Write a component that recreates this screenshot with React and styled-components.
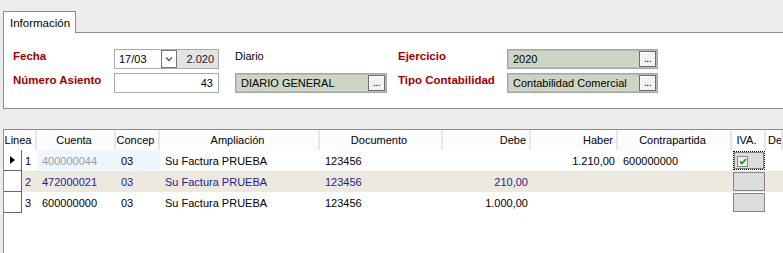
import React from 'react'
import styled, { createGlobalStyle } from 'styled-components'

const GlobalStyle = createGlobalStyle`
  html, body {
    margin: 0;
    padding: 0;
    background: #ececec;
    font-family: "Liberation Sans", Arial, sans-serif;
    font-size: 11px;
    color: #000;
  }
`;

const Page = styled.div`
  width: 783px;
  height: 253px;
  overflow: hidden;
  display: flex;
  flex-direction: column;
`;

const TabStrip = styled.div`
  height: 32px;
  display: flex;
  align-items: flex-end;
  padding-left: 3px;
`;

const Tab = styled.div`
  height: 22px;
  width: 73px;
  background: #fff;
  border: 1px solid #8e8e8e;
  border-bottom: none;
  margin-bottom: -1px;
  position: relative;
  z-index: 1;
  display: flex;
  align-items: center;
  padding-left: 6px;
  box-sizing: border-box;
  font-size: 11.5px;
`;

const Panel = styled.div`
  margin-left: 3px;
  height: 77px;
  box-sizing: border-box;
  background: #fff;
  border: 1px solid #8e8e8e;
  border-right: none;
  padding: 16px 0 0 9px;
`;

const Form = styled.div`
  display: grid;
  grid-template-columns: 101px 105px 16px 152px 11px 109px 151px;
  grid-template-rows: 20px 20px;
  row-gap: 4px;
  align-items: center;
`;

const Label = styled.div`
  grid-column: ${p => p.col};
  font-size: ${p => (p.strong ? '11.5px' : '11px')};
  font-weight: ${p => (p.strong ? 'bold' : 'normal')};
  color: ${p => (p.strong ? '#a00000' : '#000')};
  align-self: start;
  line-height: 14px;
`;

const DateCombo = styled.div`
  grid-column: 2;
  height: 20px;
  box-sizing: border-box;
  border: 1px solid #a9a9a9;
  display: flex;
  align-items: stretch;
`;

const DatePart = styled.div`
  width: 46px;
  display: flex;
  align-items: center;
  padding-left: 4px;
  box-sizing: border-box;
`;

const DropButton = styled.div`
  width: 16px;
  border: 1px solid #777;
  box-sizing: border-box;
  background: #fff;
  display: flex;
  align-items: center;
  justify-content: center;
`;

const YearPart = styled.div`
  flex: 1;
  background: #e3e3e3;
  display: flex;
  align-items: center;
  justify-content: flex-end;
  padding-right: 4px;
  color: #222;
`;

const NumberBox = styled.div`
  grid-column: 2;
  height: 20px;
  box-sizing: border-box;
  border: 1px solid #a9a9a9;
  display: flex;
  align-items: center;
  justify-content: flex-end;
  padding-right: 5px;
`;

const Lookup = styled.div`
  grid-column: ${p => p.col};
  height: 20px;
  box-sizing: border-box;
  background: #cdd6c5;
  border: 1px solid #a6a6a6;
  box-shadow: inset 0 0 0 1px #b9beb4;
  display: flex;
  align-items: center;
  justify-content: space-between;
  padding: 0 1px 0 5px;
`;

const DotsButton = styled.div`
  width: 17px;
  height: 16px;
  box-sizing: border-box;
  border: 1px solid #6e6e6e;
  background: #f2f2f2;
  box-shadow: inset 1px 1px 0 #fff;
  display: flex;
  align-items: flex-end;
  justify-content: center;
  font-size: 10px;
  line-height: 10px;
  padding-bottom: 2px;
  letter-spacing: -0.5px;
`;

const GridBox = styled.div`
  margin: 20px 0 0 3px;
  flex: 1;
  background: #fff;
  border-top: 1px solid #8e8e8e;
  border-left: 1px solid #8e8e8e;
`;

const cols = '18px 15px 79px 44px 160px 123px 88px 87px 114px 34px 1fr';

const HeaderRow = styled.div`
  display: grid;
  grid-template-columns: ${cols};
  height: 20px;
  background: #f5f5f5;
`;

const HeadCell = styled.div`
  grid-column: ${p => p.span || 'auto'};
  display: flex;
  align-items: center;
  justify-content: ${p => (p.right ? 'flex-end' : p.left ? 'flex-start' : 'center')};
  padding: 0 3px 0 ${p => (p.left ? '2px' : '0')};
  background: #fcfcfc;
  border-right: 2px solid #e6e6e6;
  white-space: nowrap;
  overflow: hidden;
`;

const Row = styled.div`
  display: grid;
  grid-template-columns: ${cols};
  height: 21px;
  color: ${p => (p.alt ? '#1d1d8a' : '#000')};
`;

const Indicator = styled.div`
  border-right: 1px solid #666;
  border-bottom: 1px solid #666;
  background: #fff;
  display: flex;
  align-items: center;
  justify-content: center;
  box-sizing: border-box;
`;

const Cell = styled.div`
  background: ${p => (p.sel ? '#eef6fe' : p.alt ? '#ede9df' : '#fff')};
  color: ${p => p.muted ? '#9c9c9c' : 'inherit'};
  display: flex;
  align-items: center;
  justify-content: ${p => (p.right ? 'flex-end' : 'flex-start')};
  padding: ${p => (p.right ? '0 3px 0 0' : '0 0 0 5px')};
  white-space: nowrap;
  overflow: hidden;
`;

const CheckCell = styled.div`
  background: ${p => (p.alt ? '#ede9df' : '#fff')};
  padding: 1px;
  display: flex;
`;

const CheckFrame = styled.div`
  flex: 1;
  box-sizing: border-box;
  outline: ${p => (p.focus ? '1px dotted #000' : 'none')};
  outline-offset: -1px;
  padding: ${p => (p.focus ? '1px' : '0')};
  display: flex;
`;

const CheckInner = styled.div`
  flex: 1;
  background: #dcdcdc;
  border: 1px solid #858585;
  display: flex;
  align-items: flex-start;
  padding: 3px 0 0 2px;
`;

const Check = styled.div`
  width: 11px;
  height: 11px;
  box-sizing: border-box;
  border: 1px solid #8a8a8a;
  background: #f0f0f0;
  display: flex;
  align-items: center;
  justify-content: center;
`;

const rows = [
  { n: 1, cuenta: '400000044', concep: '03', ampl: 'Su Factura PRUEBA', doc: '123456', debe: '', haber: '1.210,00', contra: '600000000', checked: true },
  { n: 2, cuenta: '472000021', concep: '03', ampl: 'Su Factura PRUEBA', doc: '123456', debe: '210,00', haber: '', contra: '' },
  { n: 3, cuenta: '600000000', concep: '03', ampl: 'Su Factura PRUEBA', doc: '123456', debe: '1.000,00', haber: '', contra: '' },
]

const App = () => {
  return (
    <Page>
      <GlobalStyle />
      <TabStrip>
        <Tab>Información</Tab>
      </TabStrip>
      <Panel>
        <Form>
          <Label col={1} strong>Fecha</Label>
          <DateCombo>
            <DatePart>17/03</DatePart>
            <DropButton>
              <svg width="8" height="6" viewBox="0 0 8 6">
                <polyline points="1,1.5 4,4.5 7,1.5" fill="none" stroke="#555" strokeWidth="1.3" />
              </svg>
            </DropButton>
            <YearPart>2.020</YearPart>
          </DateCombo>
          <Label col={4}>Diario</Label>
          <Label col={6} strong>Ejercicio</Label>
          <Lookup col={7}>
            <span>2020</span>
            <DotsButton>...</DotsButton>
          </Lookup>

          <Label col={1} strong>Número Asiento</Label>
          <NumberBox>43</NumberBox>
          <Lookup col={4}>
            <span>DIARIO GENERAL</span>
            <DotsButton>...</DotsButton>
          </Lookup>
          <Label col={6} strong>Tipo Contabilidad</Label>
          <Lookup col={7}>
            <span>Contabilidad Comercial</span>
            <DotsButton>...</DotsButton>
          </Lookup>
        </Form>
      </Panel>

      <GridBox>
        <HeaderRow>
          <HeadCell span="span 2">Linea</HeadCell>
          <HeadCell>Cuenta</HeadCell>
          <HeadCell>Concep</HeadCell>
          <HeadCell>Ampliación</HeadCell>
          <HeadCell>Documento</HeadCell>
          <HeadCell right>Debe</HeadCell>
          <HeadCell right>Haber</HeadCell>
          <HeadCell>Contrapartida</HeadCell>
          <HeadCell>IVA.</HeadCell>
          <HeadCell left>De</HeadCell>
        </HeaderRow>
        {rows.map((r, i) => {
          const alt = i === 1
          const first = i === 0
          return (
            <Row key={r.n} alt={alt}>
              <Indicator>
                {first && (
                  <svg width="6" height="8" viewBox="0 0 6 8">
                    <polygon points="0,0 5,4 0,8" fill="#000" />
                  </svg>
                )}
              </Indicator>
              <Cell alt={alt} style={{ paddingLeft: 3 }}>{r.n}</Cell>
              <Cell alt={alt} sel={first} muted={first}>{r.cuenta}</Cell>
              <Cell alt={alt} sel={first}>{r.concep}</Cell>
              <Cell alt={alt}>{r.ampl}</Cell>
              <Cell alt={alt}>{r.doc}</Cell>
              <Cell alt={alt} right>{r.debe}</Cell>
              <Cell alt={alt} right>{r.haber}</Cell>
              <Cell alt={alt}>{r.contra}</Cell>
              <CheckCell alt={alt}>
                <CheckFrame focus={first}>
                  <CheckInner>
                    {r.checked && (
                      <Check>
                        <svg width="8" height="7" viewBox="0 0 8 7">
                          <polyline points="1,3.5 3,5.5 7,1" fill="none" stroke="#1e9a1e" strokeWidth="1.8" />
                        </svg>
                      </Check>
                    )}
                  </CheckInner>
                </CheckFrame>
              </CheckCell>
              <Cell alt={alt} />
            </Row>
          )
        })}
      </GridBox>
    </Page>
  )
}

export default App
